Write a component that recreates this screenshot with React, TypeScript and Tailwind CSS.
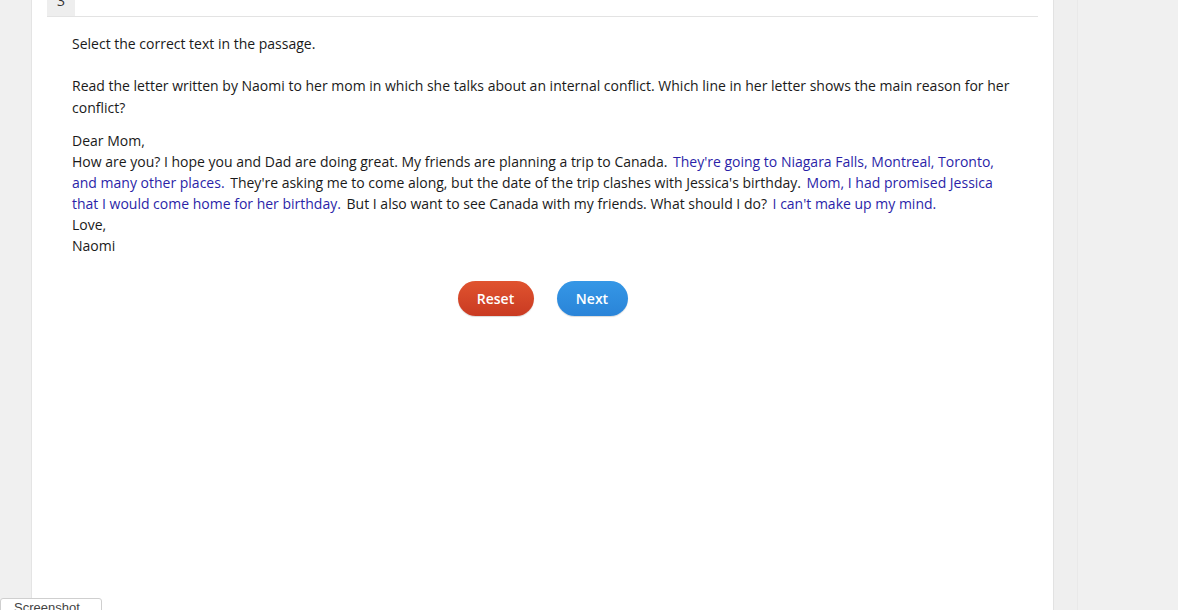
import React from "react";

const B = ({ children }: { children: React.ReactNode }) => (
  <span className="text-[#2b1fa8] mx-[2px]">{children}</span>
);

export default function App() {
  return (
    <div
      className="relative flex h-[610px] w-[1178px] overflow-hidden bg-[#f0f0f0] text-[#1a1a1a]"
      style={{ fontFamily: '"Open Sans", "Noto Sans", sans-serif' }}
    >
      <div className="w-[32px] shrink-0 border-r border-[#e4e4e4] bg-[#f0f0f0]" />
      <div className="w-[1022px] shrink-0 border-r border-[#e2e2e2] bg-white pl-[15px] pr-[15px]">
        <div className="border-b border-[#e3e3e3]">
          <div className="relative h-[16px] w-[28px] overflow-hidden bg-[#eeeeee]">
            <span className="absolute left-[10px] top-[-9px] text-[14px] leading-[20px] text-[#333]">3</span>
          </div>
        </div>
        <div className="pl-[25px] pr-[24px] text-[14px]">
          <p className="mt-[16px] leading-[22px]">Select the correct text in the passage.</p>
          <p className="mt-[20px] leading-[22px]">
            Read the letter written by Naomi to her mom in which she talks about an internal conflict. Which line in her letter shows the main reason for her conflict?
          </p>
          <div className="mt-[11px] leading-[21px]">
            <div>Dear Mom,</div>
            <div>
              How are you? I hope you and Dad are doing great. My friends are planning a trip to Canada.{" "}
              <B>They're going to Niagara Falls, Montreal, Toronto, and many other places.</B>{" "}
              They're asking me to come along, but the date of the trip clashes with Jessica's birthday.{" "}
              <B>Mom, I had promised Jessica that I would come home for her birthday.</B>{" "}
              But I also want to see Canada with my friends. What should I do?{" "}
              <B>I can't make up my mind.</B>
            </div>
            <div>Love,</div>
            <div>Naomi</div>
          </div>
          <div className="mt-[25px] flex justify-center gap-[23px] pr-[1px]">
            <button className="h-[35px] w-[76px] rounded-full bg-gradient-to-b from-[#e0532f] to-[#c93a22] text-[14px] font-semibold text-white shadow-[0_1px_1px_rgba(0,0,0,0.15)]">
              Reset
            </button>
            <button className="h-[35px] w-[71px] rounded-full bg-gradient-to-b from-[#3597e6] to-[#2a84d8] text-[14px] font-semibold text-white shadow-[0_1px_1px_rgba(0,0,0,0.15)]">
              Next
            </button>
          </div>
        </div>
      </div>
      <div className="flex flex-1">
        <div className="w-[23px] bg-[#efefef]" />
        <div className="flex-1 border-l border-[#e9e9e9] bg-[#f0f0f0]" />
      </div>
      <div className="absolute left-0 top-[598px] h-[20px] w-[102px] rounded-t-[3px] border border-[#cfcfcf] bg-white pl-[13px] text-[13px] leading-[18px] text-[#444]"
        style={{ fontFamily: '"Liberation Sans", Arial, sans-serif' }}>
        Screenshot
      </div>
    </div>
  );
}
